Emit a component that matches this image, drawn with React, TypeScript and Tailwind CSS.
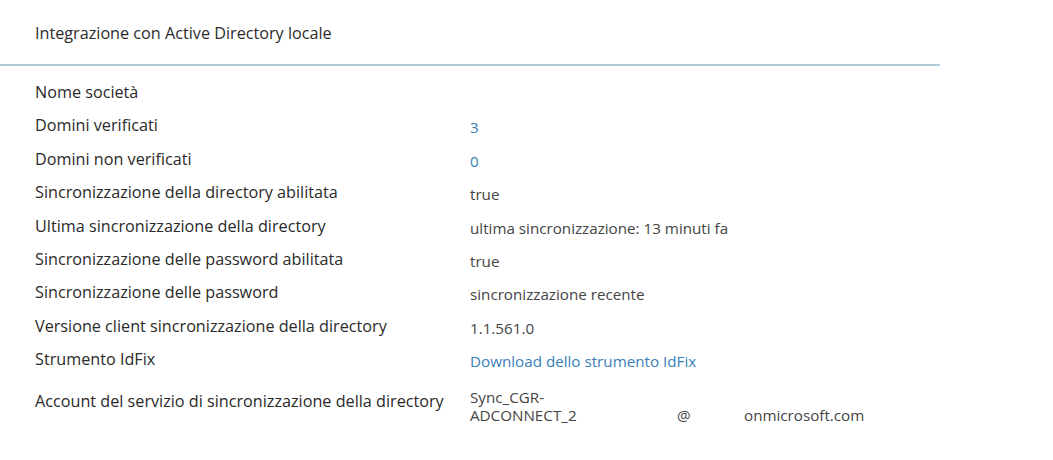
import React from "react";

type Row = { label: string; value: React.ReactNode; link?: boolean };

const rows: Row[] = [
  { label: "Nome società", value: "" },
  { label: "Domini verificati", value: "3", link: true },
  { label: "Domini non verificati", value: "0", link: true },
  { label: "Sincronizzazione della directory abilitata", value: "true" },
  { label: "Ultima sincronizzazione della directory", value: "ultima sincronizzazione: 13 minuti fa" },
  { label: "Sincronizzazione delle password abilitata", value: "true" },
  { label: "Sincronizzazione delle password", value: "sincronizzazione recente" },
  { label: "Versione client sincronizzazione della directory", value: "1.1.561.0" },
  { label: "Strumento IdFix", value: "Download dello strumento IdFix", link: true },
];

export default function App() {
  return (
    <main
      className="w-[1053px] h-[460px] bg-white text-[#333] overflow-hidden"
      style={{ fontFamily: '"Open Sans", "Noto Sans", sans-serif' }}
    >
      <h1 className="pl-[35px] pt-[21px] h-[64px] text-[16.2px] leading-[24px] text-[#2b2b2b]">
        Integrazione con Active Directory locale
      </h1>
      <div className="w-[940px] h-[2px] bg-[#b3cbd8]" />

      <div className="pl-[35px] pt-[16px] grid grid-cols-[435px_1fr]">
        {rows.map((row) => (
          <React.Fragment key={row.label}>
            <div className="h-[33.4px] text-[16.2px] text-[#2a2a2a] leading-[20px]">{row.label}</div>
            <div
              className={`h-[33.4px] pt-[2px] text-[15.2px] leading-[20px] ${
                row.link ? "text-[#3a7fb8]" : "text-[#444]"
              }`}
            >
              {row.value}
            </div>
          </React.Fragment>
        ))}
        <div className="flex items-center text-[16.2px] text-[#2a2a2a] h-[37px]">
          Account del servizio di sincronizzazione della directory
        </div>
        <div className="text-[15.2px] text-[#444] leading-[18px] pt-[5px]">
          <div>Sync_CGR-</div>
          <div className="flex">
            <span className="w-[207px]">ADCONNECT_2</span>
            <span className="w-[67px]">@</span>
            <span>onmicrosoft.com</span>
          </div>
        </div>
      </div>
    </main>
  );
}
